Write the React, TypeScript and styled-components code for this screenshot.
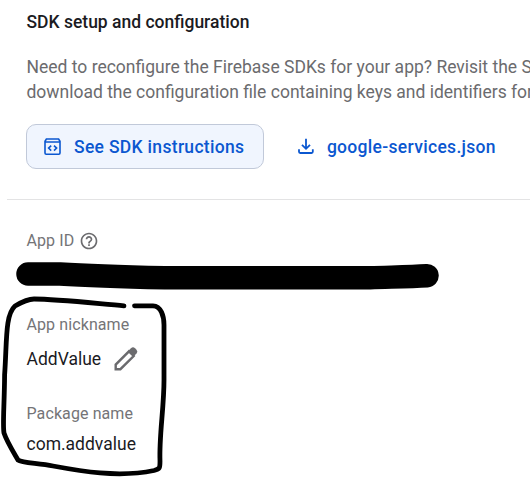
import React from "react";
import styled, { createGlobalStyle } from "styled-components";

const GlobalStyle = createGlobalStyle`
  html, body { margin: 0; background: #fff; overflow: hidden; }
  body { font-family: Roboto, "Liberation Sans", sans-serif; }
  * { box-sizing: border-box; }
`;

const Page = styled.main`
  position: relative;
  width: 530px;
  height: 478px;
  overflow: hidden;
  background: #fff;
`;

const Setup = styled.section`
  margin-left: 7px;
  height: 200px;
  padding: 10px 0 0 19.5px;
  border-bottom: 1px solid #e3e3e4;
`;

const Title = styled.h2`
  margin: 0 0 21px;
  font-size: 17.5px;
  line-height: 24px;
  font-weight: 500;
  color: #1b1b1f;
  white-space: nowrap;
`;

const Description = styled.p`
  margin: 0;
  font-size: 17.5px;
  line-height: 25px;
  color: #6b6b6e;
  white-space: nowrap;
`;

const Actions = styled.div`
  display: flex;
  margin: 19px 0 0 -0.5px;
`;

const ActionButton = styled.button<{ $outlined?: boolean }>`
  display: flex;
  align-items: center;
  height: 45px;
  gap: 10px;
  padding: 0 19px 0 15px;
  border: 1px solid ${(p) => (p.$outlined ? "#c1c9d9" : "transparent")};
  border-radius: 10px;
  background: ${(p) => (p.$outlined ? "#f0f5fe" : "transparent")};
  color: #0b57d0;
  font: 500 17.5px/24px Roboto, sans-serif;
  letter-spacing: 0.31px;
  white-space: nowrap;
  & + & { margin-left: 14.5px; }
`;

const Icon = styled.svg<{ $size: number }>`
  display: block;
  flex: none;
  width: ${(p) => p.$size}px;
  height: ${(p) => p.$size}px;
`;

const Details = styled.section`
  padding: 31px 0 0 26.5px;
`;

const Field = styled.div<{ $gap: number; $after: number }>`
  display: flex;
  flex-direction: column;
  gap: ${(p) => p.$gap}px;
  margin-bottom: ${(p) => p.$after}px;
`;

const Label = styled.div`
  display: flex;
  align-items: center;
  gap: 5px;
  height: 20px;
  font-size: 16px;
  line-height: 20px;
  letter-spacing: 0.1px;
  color: #747477;
`;

const Value = styled.div`
  display: flex;
  align-items: center;
  gap: 10px;
  height: 24px;
  font-size: 17.5px;
  line-height: 24px;
  color: #1b1b1f;
`;

const Ink = styled.svg`
  position: absolute;
  inset: 0;
  width: 530px;
  height: 478px;
  fill: none;
  stroke: #000;
  stroke-linecap: round;
  stroke-linejoin: round;
  pointer-events: none;
`;

const CodeIcon = () => (
  <Icon $size={22} viewBox="0 0 22 22" fill="none" stroke="currentColor" strokeWidth="1.6">
    <path d="M3 5.2V17q0 1.2 1.2 1.2h12.6q1.2 0 1.2-1.2V5.2L16.6 3H4.4ZM3 6h15" />
    <path d="M9.2 9.6 6.6 12.1l2.6 2.5m2.8-5 2.6 2.5-2.6 2.5" />
  </Icon>
);

const DownloadIcon = () => (
  <Icon $size={22} viewBox="0 0 22 22" fill="none" stroke="currentColor" strokeWidth="1.8">
    <path d="M11 2.8v9.8M7 8.8l4 4 4-4M4 13.2v2.6q0 1.2 1.2 1.2h11.4q1.2 0 1.2-1.2v-2.6" />
  </Icon>
);

const HelpIcon = () => (
  <Icon $size={20} viewBox="0 0 24 24" fill="#6b6b6e">
    <path d="M11 18h2v-2h-2v2zm1-16C6.48 2 2 6.48 2 12s4.48 10 10 10 10-4.48 10-10S17.52 2 12 2zm0 18c-4.41 0-8-3.59-8-8s3.59-8 8-8 8 3.59 8 8-3.59 8-8 8zm0-14c-2.21 0-4 1.79-4 4h2c0-1.1.9-2 2-2s2 .9 2 2c0 2-3 1.75-3 5h2c0-2.25 3-2.5 3-5 0-2.21-1.79-4-4-4z" />
  </Icon>
);

const PencilIcon = () => (
  <Icon $size={30} viewBox="0 0 30 30">
    <path d="M4.7 25.2v-4.6L18 7.3l4.7 4.7L9.4 25.2Z" fill="none" stroke="#6b6b6e" strokeWidth="2.4" />
    <path d="m17 7.2 3-3q2-1.8 4 0l1.5 1.5q1.8 1.9 0 3.8l-3 3Z" fill="#6b6b6e" />
  </Icon>
);

export default function App() {
  return (
    <Page>
      <GlobalStyle />
      <Setup>
        <Title>SDK setup and configuration</Title>
        <Description>
          Need to reconfigure the Firebase SDKs for your app? Revisit the S
          <br />
          download the configuration file containing keys and identifiers for
        </Description>
        <Actions>
          <ActionButton $outlined><CodeIcon />See SDK instructions</ActionButton>
          <ActionButton><DownloadIcon />google-services.json</ActionButton>
        </Actions>
      </Setup>
      <Details>
        <Field $gap={0} $after={64}>
          <Label>App ID<HelpIcon /></Label>
        </Field>
        <Field $gap={12} $after={33}>
          <Label>App nickname</Label>
          <Value>AddValue<PencilIcon /></Value>
        </Field>
        <Field $gap={8} $after={0}>
          <Label>Package name</Label>
          <Value>com.addvalue</Value>
        </Field>
      </Details>
      <Ink aria-hidden="true" viewBox="0 0 530 478">
        <path strokeWidth="23.5" d="M28 274H60C92 276 130 277 165 277.8H370C392 277 410 276.8 427 275.7" />
        <path strokeWidth="4.8" d="M124 305.8C101 304 57 299 34 299C27 299 21 302.5 15 306C5 315 7 341 4.6 375C4.4 405 2.5 425 4 433C7 442 14 453 18 460C22 463 38 463 53 466C80 471 118 478 154 470.5C160 469 160 468 160 461C159 436 164 408 164 380V325C164 316 161 306 153 305.8H134.5" />
      </Ink>
    </Page>
  );
}
